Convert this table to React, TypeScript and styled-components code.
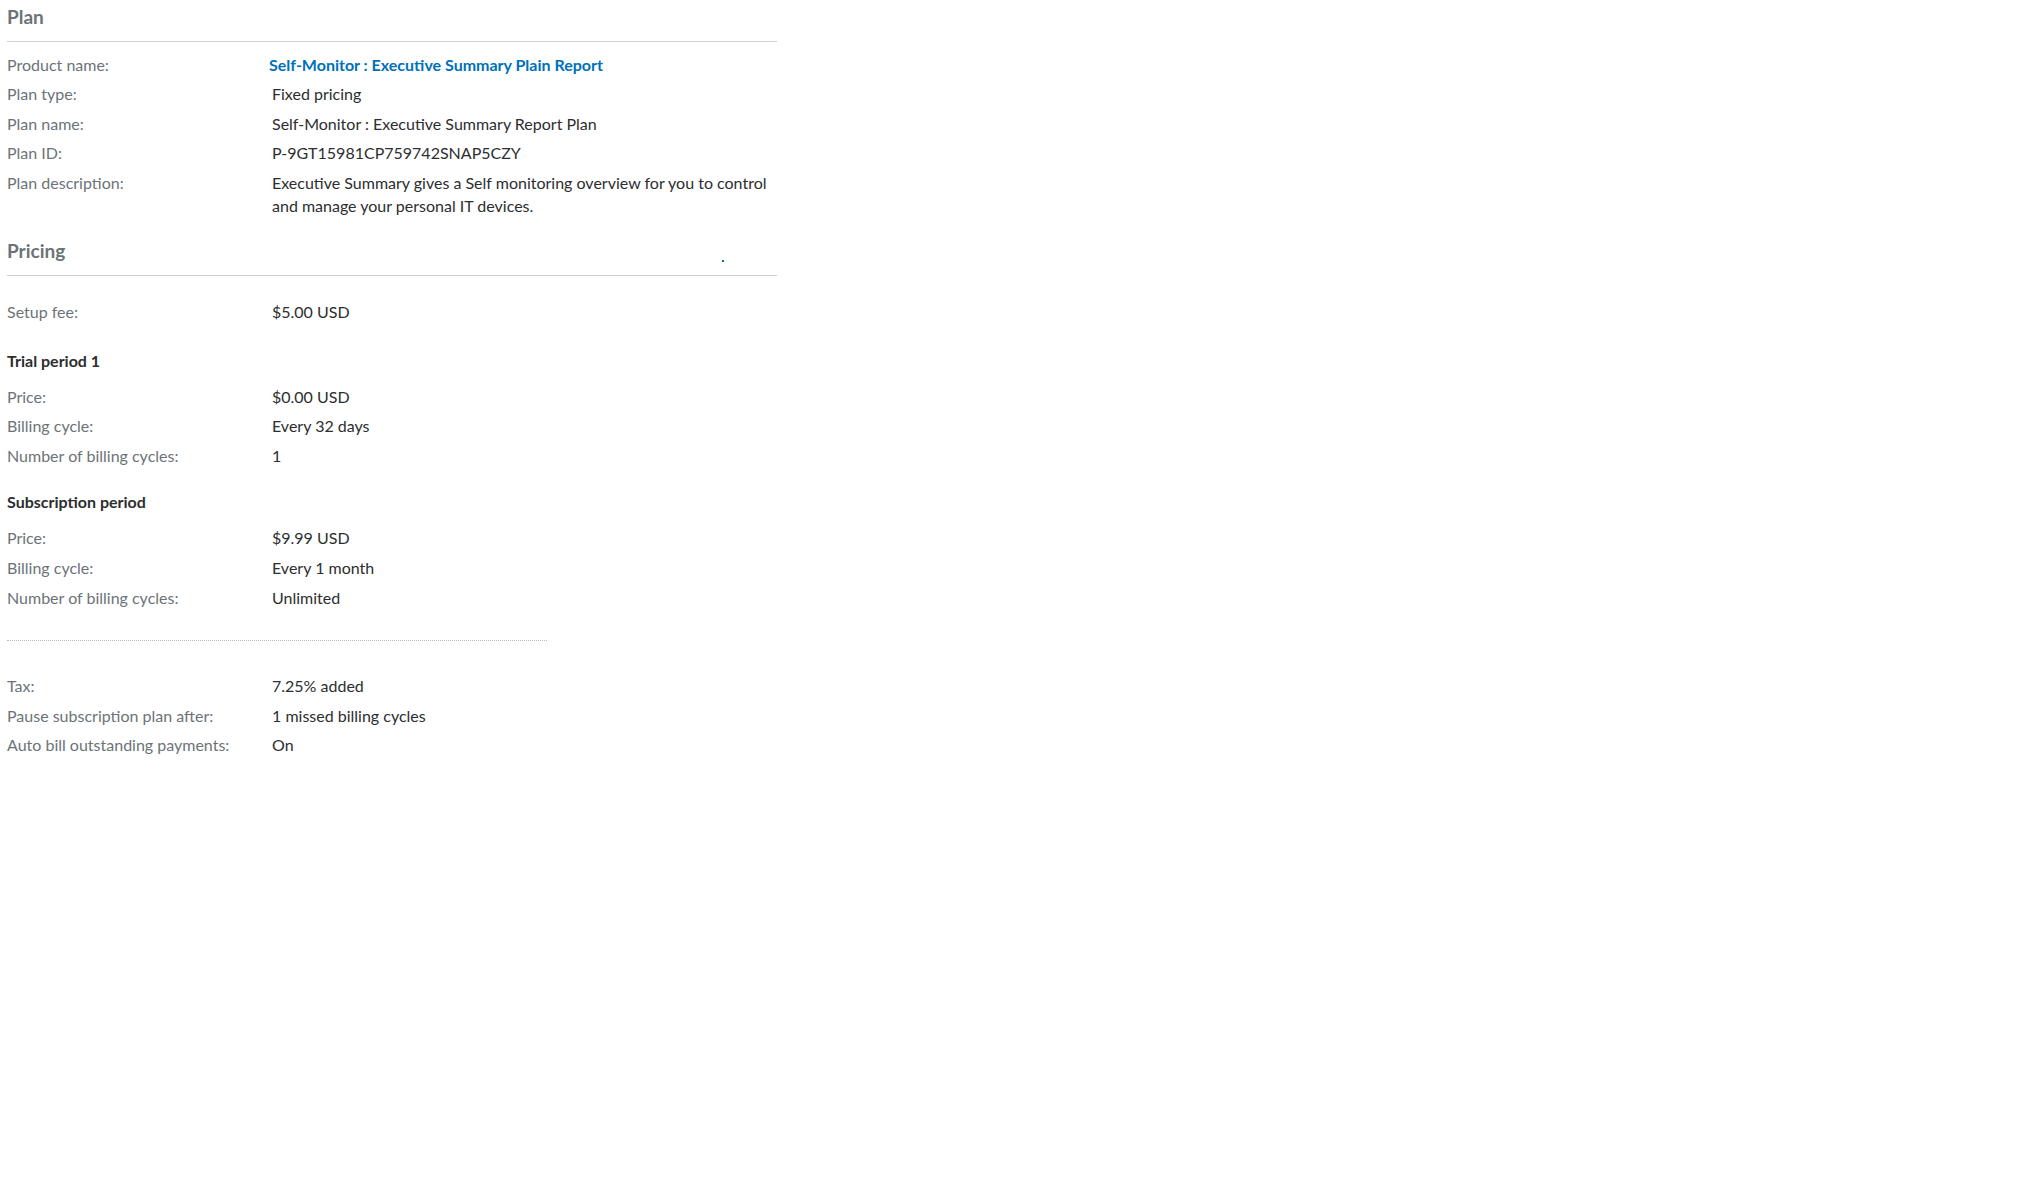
import styled, { createGlobalStyle } from 'styled-components';

type Item = { label: string; value: string; link?: boolean };

const planRows: Item[] = [
  { label: 'Product name:', value: 'Self-Monitor : Executive Summary Plain Report', link: true },
  { label: 'Plan type:', value: 'Fixed pricing' },
  { label: 'Plan name:', value: 'Self-Monitor : Executive Summary Report Plan' },
  { label: 'Plan ID:', value: 'P-9GT15981CP759742SNAP5CZY' },
  {
    label: 'Plan description:',
    value:
      'Executive Summary gives a Self monitoring overview for you to control and manage your personal IT devices.',
  },
];

const trialRows: Item[] = [
  { label: 'Price:', value: '$0.00 USD' },
  { label: 'Billing cycle:', value: 'Every 32 days' },
  { label: 'Number of billing cycles:', value: '1' },
];

const subscriptionRows: Item[] = [
  { label: 'Price:', value: '$9.99 USD' },
  { label: 'Billing cycle:', value: 'Every 1 month' },
  { label: 'Number of billing cycles:', value: 'Unlimited' },
];

const extraRows: Item[] = [
  { label: 'Tax:', value: '7.25% added' },
  { label: 'Pause subscription plan after:', value: '1 missed billing cycles' },
  { label: 'Auto bill outstanding payments:', value: 'On' },
];

const Rows = ({ items }: { items: Item[] }) => (
  <RowList>
    {items.map((item, i) => (
      <Row key={i}>
        <Label>{item.label}</Label>
        <Value $link={item.link}>{item.value}</Value>
      </Row>
    ))}
  </RowList>
);

const App = () => {
  return (
    <>
      <GlobalStyle />
      <Page>
        <SectionTitle>Plan</SectionTitle>
        <Block $top={8}>
          <Rows items={planRows} />
        </Block>

        <SectionTitle $top={15}>
          Pricing
          <Dot />
        </SectionTitle>
        <Block $top={21}>
          <Rows items={[{ label: 'Setup fee:', value: '$5.00 USD' }]} />
        </Block>

        <SubTitle $top={22}>Trial period 1</SubTitle>
        <Rows items={trialRows} />

        <SubTitle $top={20}>Subscription period</SubTitle>
        <Rows items={subscriptionRows} />

        <Divider />
        <Rows items={extraRows} />
      </Page>
    </>
  );
};

export default App;

const GlobalStyle = createGlobalStyle`
  body {
    margin: 0;
    background: #ffffff;
    font-family: Lato, "Open Sans", Arial, sans-serif;
  }
`;

const Page = styled.div`
  width: 770px;
  padding: 1.5px 7px 0;
  display: flex;
  flex-direction: column;
`;

const SectionTitle = styled.h2<{ $top?: number }>`
  position: relative;
  margin: ${(p) => p.$top || 0}px 0 0;
  padding-bottom: 9px;
  border-bottom: 1px solid #cbd2d6;
  font-size: 19px;
  line-height: 30px;
  font-weight: 700;
  color: #6c7378;
`;

const Dot = styled.span`
  position: absolute;
  left: 715px;
  top: 24px;
  width: 2px;
  height: 2px;
  background: #0070ba;
`;

const Block = styled.div<{ $top: number }>`
  margin-top: ${(p) => p.$top}px;
`;

const RowList = styled.div`
  display: flex;
  flex-direction: column;
`;

const Row = styled.div`
  display: grid;
  grid-template-columns: 265px 1fr;
  padding: 3px 0;
  font-size: 16px;
  line-height: 23.6px;
`;

const Label = styled.div`
  color: #6c7378;
`;

const Value = styled.div<{ $link?: boolean }>`
  color: ${(p) => (p.$link ? '#0070ba' : '#2c2e2f')};
  font-weight: ${(p) => (p.$link ? 700 : 400)};
  margin-left: ${(p) => (p.$link ? -3 : 0)}px;
`;

const SubTitle = styled.h3<{ $top: number }>`
  margin: ${(p) => p.$top}px 0 9px;
  font-size: 16px;
  line-height: 24px;
  font-weight: 700;
  color: #2c2e2f;
`;

const Divider = styled.hr`
  width: 540px;
  margin: 28px 0 30px;
  border: 0;
  border-top: 1px dotted #b7bcbf;
`;
